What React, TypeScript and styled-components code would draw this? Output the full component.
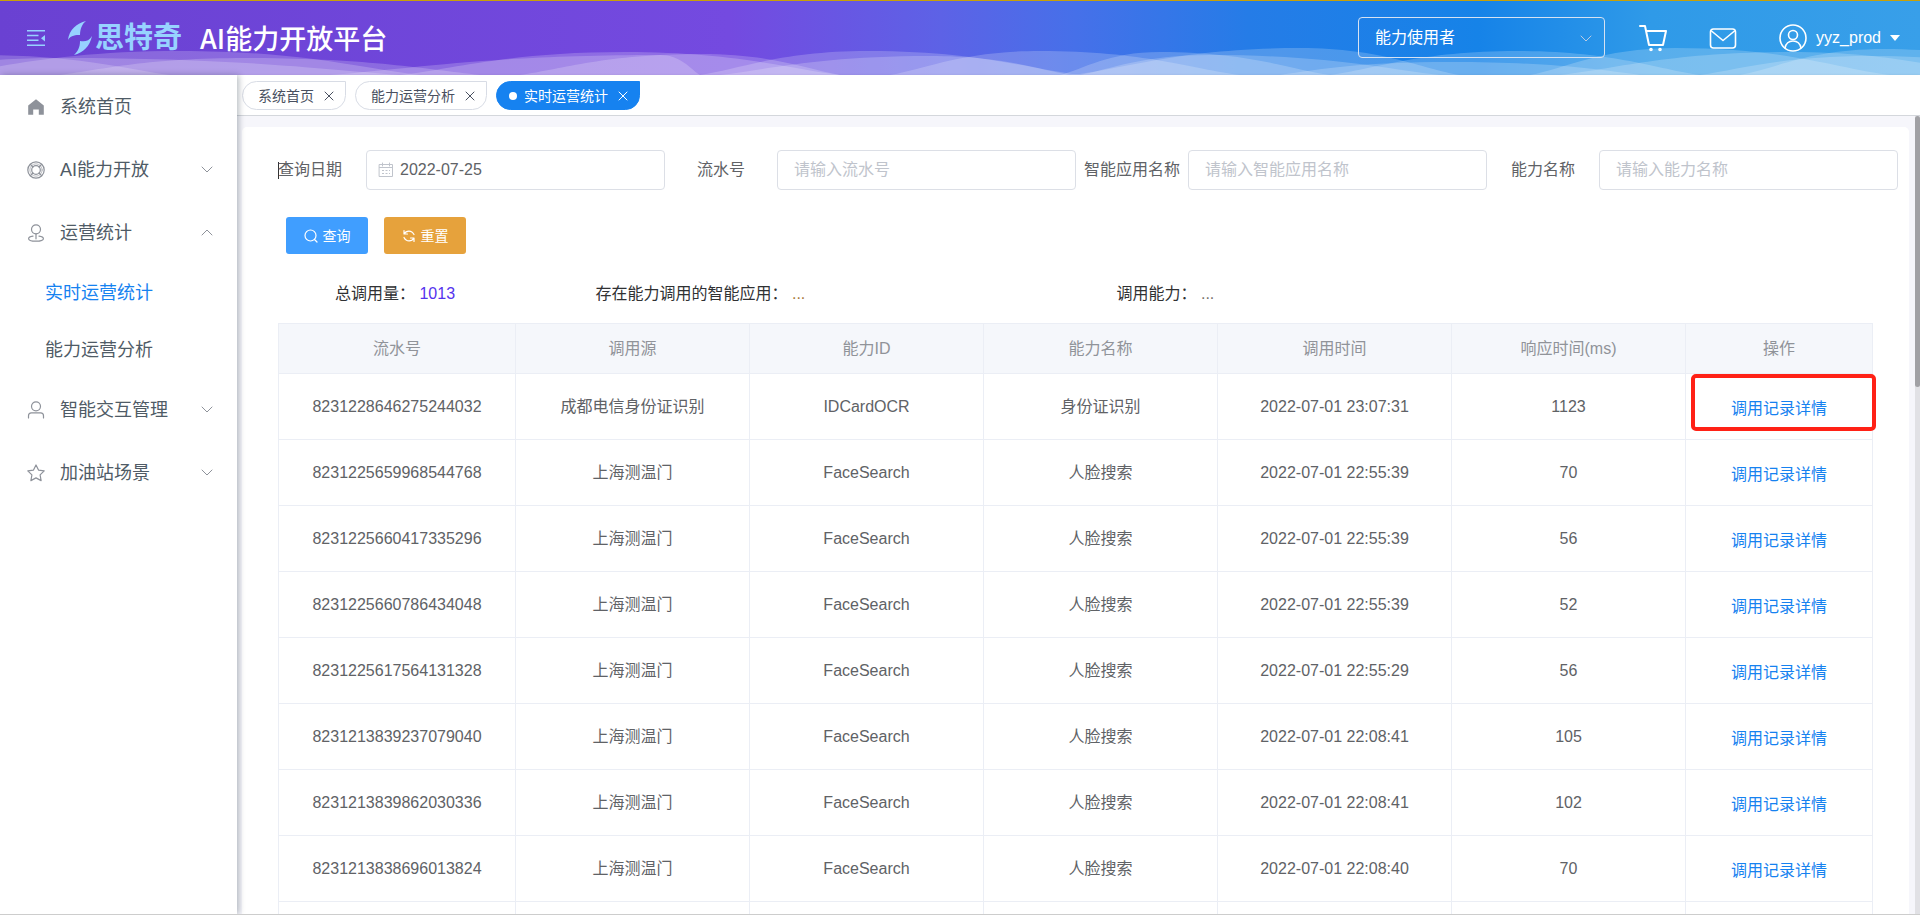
import React from 'react';
import styled, { createGlobalStyle, css } from 'styled-components';

const GlobalStyle = createGlobalStyle`
  * { box-sizing: border-box; }
  body {
    margin: 0;
    background: #fff;
    color: #606266;
    font-family: "Liberation Sans", "Noto Sans CJK SC", sans-serif;
    font-size: 16px;
    line-height: 24px;
  }
  button, input, select { font: inherit; }
  a { color: inherit; text-decoration: none; }
`;

const Shell = styled.div`
  display: flex;
  flex-direction: column;
  height: 100vh;
  overflow: hidden;
  border-top: 1px solid #c8a008;
  border-bottom: 1px solid #cdcdcd;
`;

const Header = styled.header`
  position: relative;
  display: flex;
  flex: none;
  align-items: center;
  height: 74px;
  padding: 0 20px 0 27px;
  color: #fff;
  background: linear-gradient(
    90deg,
    #6a41d2 0%,
    #744ae0 38%,
    #5d62e6 49%,
    #4670e9 56%,
    #257ce7 65%,
    #1683e8 77%,
    #2f9ae8 86%,
    #389fe9 100%
  );
`;

const Waves = styled.svg`
  position: absolute;
  left: 0;
  bottom: 0;
  width: 100%;
  height: 28px;
  fill: #fff;
  fill-opacity: 0.2;
`;

const HeaderRow = styled.div`
  position: relative;
  display: flex;
  align-items: center;
  width: 100%;
`;

const IconButton = styled.button`
  display: flex;
  padding: 0;
  border: 0;
  background: none;
  color: inherit;
  cursor: pointer;
`;

const MenuToggle = styled(IconButton)`
  margin-right: 22px;
  color: #97d2ff;
`;

const Brand = styled.span`
  margin: 0 18px 0 2px;
  color: #97d2ff;
  font-size: 29px;
  font-weight: 700;
  line-height: 40px;
`;

const Title = styled.h1`
  flex: 1;
  margin: 0;
  font-family: "Noto Sans CJK SC", sans-serif;
  font-size: 27px;
  font-weight: 500;
  line-height: 40px;
`;

const RoleSelect = styled.label`
  position: relative;
  width: 247px;
  margin: 0 34px 2px 0;

  select {
    width: 100%;
    height: 41px;
    padding: 2px 16px 0;
    border: 1px solid #d6e2f2;
    border-radius: 4px;
    background: none;
    color: #fff;
    appearance: none;
  }

  svg {
    position: absolute;
    top: 16px;
    right: 13px;
    color: #b9cbe4;
    pointer-events: none;
  }
`;

const HeaderActions = styled.div`
  display: flex;
  align-items: center;
  gap: 42px;
`;

const UserButton = styled(IconButton)`
  align-items: center;
  gap: 9px;
`;

const Body = styled.div`
  display: flex;
  flex: 1;
  min-height: 0;
`;

const Sidebar = styled.nav`
  position: relative;
  z-index: 1;
  flex: none;
  width: 237px;
  background: #fff;
  box-shadow: 2px 0 6px rgba(0, 21, 41, 0.28);
  color: #4f5b66;
  font-size: 18px;
`;

const MenuItem = styled.a`
  display: flex;
  align-items: center;
  gap: 15px;
  height: 63px;
  padding: 0 24px 0 27px;

  > svg { flex: none; color: #8e929a; }
  > span { flex: 1; }
`;

const SubItem = styled.a<{ $active?: boolean }>`
  display: flex;
  align-items: center;
  height: 57px;
  padding-left: 45px;
  color: ${(p) => (p.$active ? '#1682f0' : 'inherit')};
`;

const Main = styled.main`
  display: flex;
  flex: 1;
  flex-direction: column;
  min-width: 0;
`;

const TabBar = styled.div`
  position: relative;
  display: flex;
  flex: none;
  gap: 9px;
  height: 41px;
  padding: 6px 5px;
  border-bottom: 1px solid #d4d7dc;
  box-shadow: 0 1px 3px rgba(0, 0, 0, 0.16);
`;

const Tab = styled.div<{ $active?: boolean }>`
  display: flex;
  align-items: center;
  height: 29px;
  padding: 0 11px 0 15px;
  border: 1px solid #d8dce5;
  border-radius: 15px 0 15px 15px;
  color: #495060;
  font-size: 14px;

  ${(p) =>
    p.$active &&
    css`
      border-color: #1682f0;
      background: #1682f0;
      color: #fff;

      &::before {
        content: '';
        width: 8px;
        height: 8px;
        margin: 0 7px 0 -3px;
        border-radius: 50%;
        background: #fff;
      }
    `}

  button { margin-left: 10px; }
`;

const Viewport = styled.div`
  position: relative;
  flex: 1;
  min-height: 0;
  padding: 11px 11px 0 5px;
  overflow: hidden;
  background: #f6f6fb;
`;

const ScrollTrack = styled.div`
  position: absolute;
  top: 0;
  right: 0;
  bottom: 0;
  width: 5px;
  background: #e1e1e5;

  &::before {
    content: '';
    display: block;
    height: 34%;
    border-radius: 3px;
    background: #a1a1a5;
  }
`;

const Card = styled.section`
  padding: 23px 11px 0 12px;
  border-radius: 5px;
  background: #fff;
`;

const Filters = styled.form`
  display: grid;
  grid-template-columns: repeat(4, 1fr);
  row-gap: 27px;
`;

const Field = styled.div`
  position: relative;
  display: flex;
  align-items: center;

  svg {
    position: absolute;
    left: 124px;
    color: #c0c4cc;
  }
`;

const FieldLabel = styled.label<{ $caret?: boolean }>`
  display: flex;
  flex: none;
  align-items: center;
  justify-content: center;
  width: 112px;

  ${(p) =>
    p.$caret &&
    css`
      &::before {
        content: '';
        width: 1px;
        height: 17px;
        margin-right: -1px;
        background: #333;
      }
    `}
`;

const TextInput = styled.input<{ $icon?: boolean }>`
  flex: 1;
  min-width: 0;
  height: 40px;
  padding: 0 15px 0 ${(p) => (p.$icon ? '33px' : '16px')};
  border: 1px solid #dcdfe6;
  border-radius: 4px;
  background: #fff;
  color: #606266;
  outline: none;

  &::placeholder { color: #c0c4cc; opacity: 1; }
`;

const Actions = styled.div`
  display: flex;
  grid-column: 1 / -1;
  gap: 16px;
  padding-left: 32px;
`;

const ActionButton = styled.button<{ $tone: string }>`
  display: flex;
  align-items: center;
  justify-content: center;
  gap: 5px;
  width: 82px;
  height: 37px;
  border: 0;
  border-radius: 3px;
  background: ${(p) => p.$tone};
  color: #fff;
  font-size: 14px;
  cursor: pointer;
`;

const Stats = styled.div`
  display: grid;
  grid-template-columns: 4fr 8fr 12fr;
  margin-left: 81px;
  padding: 28px 0 17px;
  color: #303133;
`;

const StatValue = styled.span<{ $color: string }>`
  color: ${(p) => p.$color};
`;

const Records = styled.table`
  width: calc(100% - 49px);
  margin-left: 24px;
  border-top: 1px solid #ebeef5;
  border-left: 1px solid #ebeef5;
  border-spacing: 0;
  table-layout: fixed;

  th, td {
    position: relative;
    padding: 0;
    border-right: 1px solid #ebeef5;
    border-bottom: 1px solid #ebeef5;
    text-align: center;
  }
  th {
    height: 50px;
    background: #f5f7fb;
    color: #909399;
    font-weight: 400;
  }
  td { height: 66px; }
`;

const FirstCol = styled.col`
  width: 237px;
`;

const LastCol = styled.col`
  width: 187px;
`;

const DetailLink = styled.a`
  display: block;
  padding-top: 4px;
  color: #1682f0;
`;

const Highlight = styled.span`
  position: absolute;
  inset: 0 -4px 8px 5px;
  border: 4px solid #ff2116;
  border-radius: 5px;
  pointer-events: none;
`;

/* start, peak, peak height, end */
const humps: [number, number, number, number][] = [
  [-300, -20, 20, 170],
  [-120, 60, 17, 400],
  [-60, 180, 24, 420],
  [60, 245, 17, 480],
  [400, 625, 23, 840],
  [330, 660, 20, 700],
  [520, 700, 21, 840],
  [700, 868, 24, 1080],
  [720, 930, 19, 1070],
  [890, 1040, 24, 1240],
  [1060, 1160, 23, 1330],
  [1070, 1300, 27, 1460],
  [1080, 1210, 20, 1440],
  [1330, 1517, 24, 1700],
  [1280, 1450, 13, 1640],
  [1530, 1676, 27, 1890],
  [1560, 1790, 23, 1990],
  [1740, 1884, 26, 2060],
  [1700, 1870, 19, 2060],
];

const humpPath = ([s, p, h, e]: [number, number, number, number]) => {
  const a = (p - s) * 0.4;
  const b = (e - p) * 0.4;
  const y = 28 - h;
  return `M${s} 28C${s + a * 0.6} 22 ${p - a * 1.3} ${y} ${p} ${y}C${p + b * 1.3} ${y} ${e - b * 0.6} 22 ${e} 28Z`;
};

const HeaderWaves = () => (
  <Waves viewBox="0 0 1920 28" preserveAspectRatio="none" aria-hidden="true">
    {humps.map((h, i) => (
      <path key={i} d={humpPath(h)} />
    ))}
  </Waves>
);

type StrokeProps = { size?: number; box?: number; width?: number; children: React.ReactNode };

const Stroke = ({ size = 18, box = 18, width = 1, children }: StrokeProps) => (
  <svg
    width={size}
    height={size}
    viewBox={`0 0 ${box} ${box}`}
    fill="none"
    stroke="currentColor"
    strokeWidth={width}
    strokeLinecap="round"
    strokeLinejoin="round"
    aria-hidden="true"
  >
    {children}
  </svg>
);

const Chevron = ({ up }: { up?: boolean }) => (
  <Stroke size={12} box={12}>
    <path d={up ? 'M1 8l5-5 5 5' : 'M1 3l5 5 5-5'} />
  </Stroke>
);

const Close = () => (
  <Stroke size={10} box={10}>
    <path d="M1 1l8 8M9 1L1 9" />
  </Stroke>
);

const HomeIcon = () => (
  <svg width="18" height="18" viewBox="0 0 18 18" fill="currentColor" aria-hidden="true">
    <path d="M9 1.2L1.2 7.4v9.4h5v-5.2h5.6v5.2h5V7.4z" />
  </svg>
);

const HelpIcon = () => (
  <Stroke width={1.2}>
    <circle cx="9" cy="9" r="8.2" />
    <circle cx="9" cy="9" r="6.2" strokeWidth="0.6" />
    <circle cx="9" cy="9" r="4.3" />
    <path d="M3.4 3.4L6 6M14.6 3.4L12 6M3.4 14.6L6 12M14.6 14.6L12 12" />
  </Stroke>
);

const PlaceIcon = () => (
  <Stroke width={1.2}>
    <circle cx="9" cy="5.3" r="4.5" />
    <path d="M9 9.8v5M6 12.2c-2.8.4-4.4 1.3-4.4 2.5 0 1.6 3.3 2.5 7.4 2.5s7.4-.9 7.4-2.5c0-1.2-1.6-2.1-4.4-2.5" />
  </Stroke>
);

const PersonIcon = () => (
  <Stroke width={1.2}>
    <circle cx="9" cy="5.3" r="4.5" />
    <path d="M1.5 17v-2.3c0-1.7 1.1-2.9 2.9-2.9h9.2c1.8 0 2.9 1.2 2.9 2.9V17" />
  </Stroke>
);

const StarIcon = () => (
  <Stroke width={1.2}>
    <path d="M9 1l2.5 5.1 5.7.8-4.1 4 1 5.7L9 13.9l-5.1 2.7 1-5.7-4.1-4 5.7-.8z" />
  </Stroke>
);

const LogoMark = () => (
  <svg width="26" height="36" viewBox="0 0 26 36" fill="#97d2ff" aria-hidden="true">
    <path d="M19 1C10 3 2 10 1 20c3-5 8-5 12-5 0-6 2-11 6-14z" />
    <path d="M25 16c-3 5-7 6-12 5 0 6-2 10-6 14 9-2 16-9 18-19z" />
  </svg>
);

const menu = [
  { text: '系统首页', icon: <HomeIcon /> },
  { text: 'AI能力开放', icon: <HelpIcon />, arrow: 'down' },
  {
    text: '运营统计',
    icon: <PlaceIcon />,
    arrow: 'up',
    children: ['实时运营统计', '能力运营分析'],
  },
  { text: '智能交互管理', icon: <PersonIcon />, arrow: 'down' },
  { text: '加油站场景', icon: <StarIcon />, arrow: 'down' },
];

const tabs = ['系统首页', '能力运营分析', '实时运营统计'];

const columns = ['流水号', '调用源', '能力ID', '能力名称', '调用时间', '响应时间(ms)', '操作'];

const face = (id: string, time: string, ms: number) => [
  id, '上海测温门', 'FaceSearch', '人脸搜索', `2022-07-01 ${time}`, String(ms),
];

const rows = [
  ['8231228646275244032', '成都电信身份证识别', 'IDCardOCR', '身份证识别', '2022-07-01 23:07:31', '1123'],
  face('8231225659968544768', '22:55:39', 70),
  face('8231225660417335296', '22:55:39', 56),
  face('8231225660786434048', '22:55:39', 52),
  face('8231225617564131328', '22:55:29', 56),
  face('8231213839237079040', '22:08:41', 105),
  face('8231213839862030336', '22:08:41', 102),
  face('8231213838696013824', '22:08:40', 70),
];

export default function App() {
  return (
    <Shell>
      <GlobalStyle />
      <Header>
        <HeaderWaves />
        <HeaderRow>
          <MenuToggle type="button" aria-label="菜单">
            <svg width="18" height="16" viewBox="0 0 18 16" fill="currentColor" aria-hidden="true">
              <path d="M0 0h18v1.5H0zM0 4.8h11.5v1.4H0zM0 9.5h11.5v1.4H0zM0 14.5h18V16H0zM18 5v6.5l-4-3.25z" />
            </svg>
          </MenuToggle>
          <LogoMark />
          <Brand>思特奇</Brand>
          <Title>AI能力开放平台</Title>
          <RoleSelect>
            <select aria-label="角色">
              <option>能力使用者</option>
            </select>
            <Chevron />
          </RoleSelect>
          <HeaderActions>
            <IconButton type="button" aria-label="购物车">
              <Stroke size={28} box={28} width={2}>
                <path d="M1 2h5l4 19h14l3-14H7.5" />
                <circle cx="12" cy="25.5" r="0.8" />
                <circle cx="21" cy="25.5" r="0.8" />
              </Stroke>
            </IconButton>
            <IconButton type="button" aria-label="消息">
              <Stroke size={28} box={28} width={1.6}>
                <rect x="1.5" y="5" width="25" height="19" rx="3" />
                <path d="M2.5 7L14 16.5 25.5 7" />
              </Stroke>
            </IconButton>
            <UserButton type="button">
              <Stroke size={28} box={28} width={1.6}>
                <circle cx="14" cy="14" r="13" />
                <circle cx="14" cy="11" r="4.5" />
                <path d="M6 24c1-5 4-7 8-7s7 2 8 7" />
              </Stroke>
              <span>yyz_prod</span>
              <svg width="10" height="6" viewBox="0 0 10 6" fill="currentColor" aria-hidden="true">
                <path d="M0 0h10L5 6z" />
              </svg>
            </UserButton>
          </HeaderActions>
        </HeaderRow>
      </Header>
      <Body>
        <Sidebar>
          {menu.map((m) => (
            <React.Fragment key={m.text}>
              <MenuItem href="#">
                {m.icon}
                <span>{m.text}</span>
                {m.arrow && <Chevron up={m.arrow === 'up'} />}
              </MenuItem>
              {m.children?.map((c, i) => (
                <SubItem key={c} href="#" $active={i === 0}>
                  {c}
                </SubItem>
              ))}
            </React.Fragment>
          ))}
        </Sidebar>
        <Main>
          <TabBar>
            {tabs.map((t, i) => (
              <Tab key={t} $active={i === 2}>
                <a href="#">{t}</a>
                <IconButton type="button" aria-label="关闭">
                  <Close />
                </IconButton>
              </Tab>
            ))}
          </TabBar>
          <Viewport>
            <Card>
              <Filters onSubmit={(e) => e.preventDefault()}>
                <Field>
                  <FieldLabel htmlFor="date" $caret>查询日期</FieldLabel>
                  <TextInput id="date" defaultValue="2022-07-25" $icon />
                  <Stroke size={16} box={16}>
                    <path d="M1.5 2.5h13v12h-13zM4.5 1v3M11.5 1v3M1.5 5.5h13" />
                    <path d="M4 8.5h8M4 11.5h8" strokeDasharray="2 1.5" strokeLinecap="butt" />
                  </Stroke>
                </Field>
                <Field>
                  <FieldLabel htmlFor="serial">流水号</FieldLabel>
                  <TextInput id="serial" placeholder="请输入流水号" />
                </Field>
                <Field>
                  <FieldLabel htmlFor="app">智能应用名称</FieldLabel>
                  <TextInput id="app" placeholder="请输入智能应用名称" />
                </Field>
                <Field>
                  <FieldLabel htmlFor="ability">能力名称</FieldLabel>
                  <TextInput id="ability" placeholder="请输入能力名称" />
                </Field>
                <Actions>
                  <ActionButton type="submit" $tone="#409eff">
                    <Stroke size={14} box={14} width={1.2}>
                      <circle cx="6.5" cy="6.5" r="5.5" />
                      <path d="M10.5 10.5l2.5 2.5" />
                    </Stroke>
                    查询
                  </ActionButton>
                  <ActionButton type="reset" $tone="#e6a23c">
                    <Stroke size={14} box={14} width={1.2}>
                      <path d="M2 1.5V5h3.5M2.2 4.8C4 1.5 9.5.5 12 5.5M12 12.5V9H8.5M11.8 9.2C10 12.5 4.5 13.5 2 8.5" />
                    </Stroke>
                    重置
                  </ActionButton>
                </Actions>
              </Filters>
              <Stats>
                <div>总调用量： <StatValue $color="#5533ee">1013</StatValue></div>
                <div>存在能力调用的智能应用： <StatValue $color="#a87b3c">...</StatValue></div>
                <div>调用能力： <StatValue $color="#77736c">...</StatValue></div>
              </Stats>
              <Records>
                <colgroup>
                  <FirstCol />
                  <col span={5} />
                  <LastCol />
                </colgroup>
                <thead>
                  <tr>
                    {columns.map((c) => (
                      <th key={c} scope="col">{c}</th>
                    ))}
                  </tr>
                </thead>
                <tbody>
                  {rows.map((r, i) => (
                    <tr key={r[0]}>
                      {r.map((cell, j) => (
                        <td key={j}>{cell}</td>
                      ))}
                      <td>
                        <DetailLink href="#">调用记录详情</DetailLink>
                        {i === 0 && <Highlight />}
                      </td>
                    </tr>
                  ))}
                  <tr>
                    {columns.map((c) => (
                      <td key={c} />
                    ))}
                  </tr>
                </tbody>
              </Records>
            </Card>
            <ScrollTrack />
          </Viewport>
        </Main>
      </Body>
    </Shell>
  );
}
